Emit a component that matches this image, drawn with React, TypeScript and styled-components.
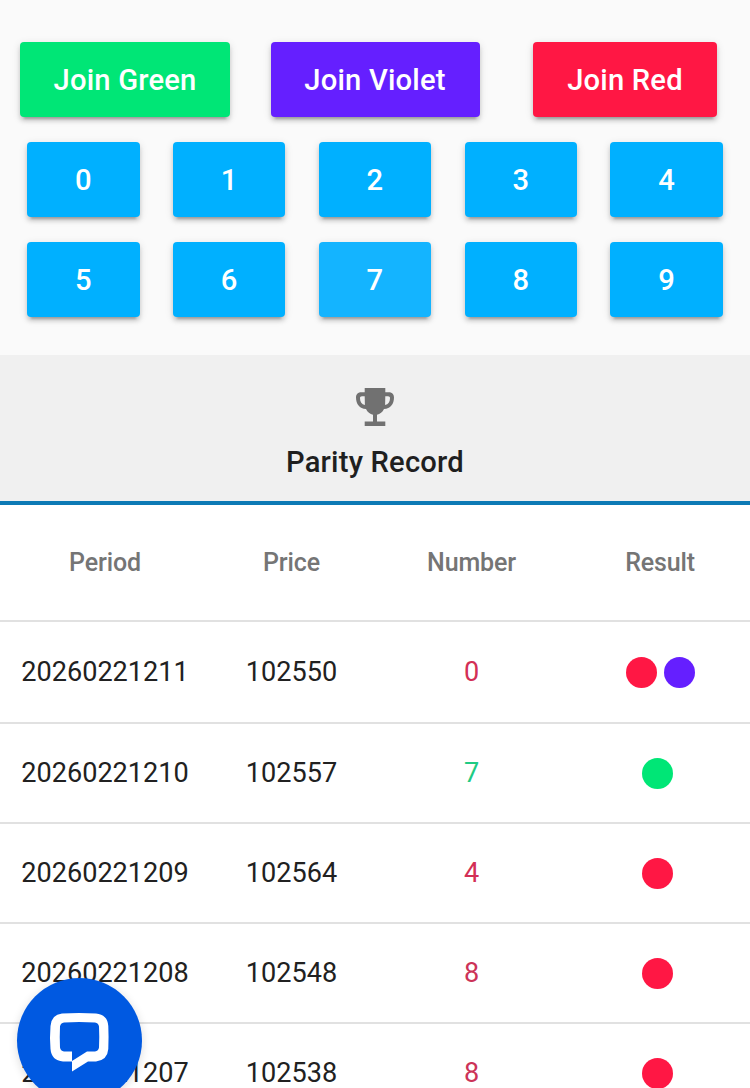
import React from "react";
import styled, { createGlobalStyle } from "styled-components";

const GlobalStyle = createGlobalStyle`
  * { box-sizing: border-box; }
  html, body { margin: 0; padding: 0; height: 100%; overflow: hidden; }
  body { background: #fff; font-family: Roboto, "Liberation Sans", sans-serif; }
`;

const Page = styled.main`
  width: 750px;
  height: 1088px;
  overflow: hidden;
  background: #fff;
  color: #1f1f1f;
`;

const Controls = styled.section`
  height: 355px;
  padding-top: 42px;
  background: #fafafa;
`;

const JoinRow = styled.div`
  display: grid;
  grid-template-columns: 250px 250px 250px;
  height: 100px;
  justify-items: center;
  align-items: start;
`;

const NumberGrid = styled.div`
  display: grid;
  grid-template-columns: repeat(5, 112.5px);
  column-gap: 33.3px;
  row-gap: 25px;
  justify-content: center;
`;

const Button = styled.button<{ $color: string; $width: number }>`
  width: ${(p) => p.$width}px;
  height: 75px;
  padding: 0;
  border: 0;
  border-radius: 4px;
  background: ${(p) => p.$color};
  color: #fff;
  font: 500 29.17px/76px Roboto, sans-serif;
  letter-spacing: 0.2px;
  white-space: nowrap;
  box-shadow: 0 6px 2px -4px rgba(0, 0, 0, 0.2), 0 4px 4px 0 rgba(0, 0, 0, 0.14),
    0 2px 8px 0 rgba(0, 0, 0, 0.12);
`;

const RecordTab = styled.header`
  height: 150px;
  padding-top: 33px;
  display: flex;
  flex-direction: column;
  align-items: center;
  background: #f0f0f0;
  border-bottom: 4px solid #0d7ab5;
`;

const Title = styled.h2`
  margin: 18px 0 0;
  font-size: 29.17px;
  font-weight: 500;
  letter-spacing: 0.2px;
  line-height: 36px;
`;

const Table = styled.table`
  width: 750px;
  table-layout: fixed;
  border-collapse: separate;
  border-spacing: 0;
`;

const HeadCell = styled.th`
  height: 117px;
  padding: 0;
  border-bottom: 2px solid #e1e1e1;
  color: #757575;
  font-size: 25px;
  font-weight: 500;
  letter-spacing: -0.15px;
  text-align: center;
`;

const Cell = styled.td<{ $color?: string }>`
  height: 100px;
  padding: 0;
  border-bottom: 2px solid #e1e1e1;
  color: ${(p) => p.$color ?? "#212121"};
  font-size: 27.08px;
  text-align: center;
  tr:first-child > & {
    height: 102px;
  }
`;

const Dots = styled.div<{ $single: boolean }>`
  display: flex;
  justify-content: center;
  gap: 7px;
  padding-right: ${(p) => (p.$single ? 5 : 0)}px;
  padding-left: ${(p) => (p.$single ? 0 : 1)}px;
`;

const Dot = styled.span<{ $color: string }>`
  width: 31px;
  height: 31px;
  border-radius: 50%;
  background: ${(p) => p.$color};
`;

const ChatButton = styled.button`
  position: fixed;
  left: 17px;
  top: 978px;
  width: 125px;
  height: 125px;
  padding: 0;
  border: 0;
  border-radius: 50%;
  background: #0059e1;
  box-shadow: 0 2px 10px rgba(0, 0, 0, 0.14);
`;

const GREEN = "#00e676";
const VIOLET = "#651fff";
const RED = "#ff1744";
const BLUE = "#00b0ff";

const joins = [
  { label: "Join Green", color: GREEN, width: 210 },
  { label: "Join Violet", color: VIOLET, width: 209 },
  { label: "Join Red", color: RED, width: 183.5 },
];

const records = [
  { period: "20260221211", price: "102550", number: 0, tone: "#d32f56", dots: [RED, VIOLET] },
  { period: "20260221210", price: "102557", number: 7, tone: "#1fcb84", dots: [GREEN] },
  { period: "20260221209", price: "102564", number: 4, tone: "#d32f56", dots: [RED] },
  { period: "20260221208", price: "102548", number: 8, tone: "#cc3358", dots: [RED] },
  { period: "20260221207", price: "102538", number: 8, tone: "#cc3358", dots: [RED] },
];

const Trophy = () => (
  <svg width="38" height="38" viewBox="0 0 38 38" aria-hidden="true">
    <path
      fill="#717171"
      fillRule="evenodd"
      d="M8.7 0H29.3V4.2H33C36 4.2 38 6.3 38 9.5C38 16 34.5 20.6 28 21C26.500 24.200 24 26 21 26.700V33.500H29.300V38H8.700V33.500H17V26.700C14 26 11.500 24.200 10 21C3.500 20.600 0 16 0 9.500C0 6.300 2 4.200 5 4.200H8.700ZM8.700 8.300H6C4.700 8.300 4 9 4 10.200C4 13.700 5.700 16.200 8.900 17ZM29.300 8.300H32C33.300 8.300 34 9 34 10.200C34 13.700 32.300 16.200 29.100 17Z"
    />
  </svg>
);

const ChatIcon = () => (
  <svg width="125" height="125" viewBox="0 0 125 125" aria-hidden="true">
    <path
      fill="#fff"
      fillRule="evenodd"
      d="M45 35.500Q62 34.500 79 35.500Q90.500 36.500 91.300 48Q91.800 58 91.300 71Q90.500 82 79 83.500H71L55 93.500V83.500H46Q34.500 82.500 33.500 71Q32.500 59.500 33.500 48Q34.500 36.500 45 35.500ZM47 44.500Q43.500 45 43 48.500Q42.500 58 43 69.500Q43.500 73 47 73.500H55V83L70 73.500H78Q81.500 73 82 69.500Q82.500 58 82 48.500Q81.500 45 78 44.500Q62 43.500 47 44.500Z"
    />
  </svg>
);

export default function App() {
  return (
    <>
      <GlobalStyle />
      <Page>
        <Controls>
          <JoinRow>
            {joins.map((j) => (
              <Button key={j.label} $color={j.color} $width={j.width}>
                {j.label}
              </Button>
            ))}
          </JoinRow>
          <NumberGrid>
            {Array.from({ length: 10 }, (_, n) => (
              <Button key={n} $color={n === 7 ? "#14b4ff" : BLUE} $width={112.5}>
                {n}
              </Button>
            ))}
          </NumberGrid>
        </Controls>
        <RecordTab>
          <Trophy />
          <Title>Parity Record</Title>
        </RecordTab>
        <Table>
          <colgroup>
            <col width="210" />
            <col width="163" />
            <col width="197" />
            <col width="180" />
          </colgroup>
          <thead>
            <tr>
              <HeadCell>Period</HeadCell>
              <HeadCell>Price</HeadCell>
              <HeadCell>Number</HeadCell>
              <HeadCell>Result</HeadCell>
            </tr>
          </thead>
          <tbody>
            {records.map((r) => (
              <tr key={r.period}>
                <Cell>{r.period}</Cell>
                <Cell>{r.price}</Cell>
                <Cell $color={r.tone}>{r.number}</Cell>
                <Cell>
                  <Dots $single={r.dots.length === 1}>
                    {r.dots.map((c) => (
                      <Dot key={c} $color={c} />
                    ))}
                  </Dots>
                </Cell>
              </tr>
            ))}
          </tbody>
        </Table>
        <ChatButton aria-label="Open chat">
          <ChatIcon />
        </ChatButton>
      </Page>
    </>
  );
}
